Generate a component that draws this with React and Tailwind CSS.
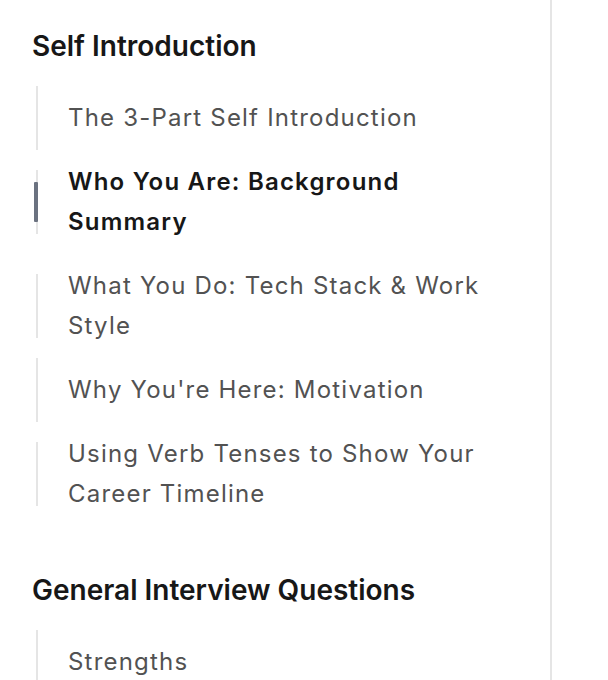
import React from "react";

const sections = [
  {
    title: "Self Introduction",
    items: [
      { label: "The 3-Part Self Introduction" },
      { label: "Who You Are: Background Summary", active: true },
      { label: "What You Do: Tech Stack & Work Style" },
      { label: "Why You're Here: Motivation" },
      { label: "Using Verb Tenses to Show Your Career Timeline" },
    ],
  },
  {
    title: "General Interview Questions",
    items: [{ label: "Strengths" }],
  },
];

export default function App() {
  return (
    <div className="flex h-[680px] w-[608px] overflow-hidden bg-white" style={{ fontFamily: "Inter, 'Noto Sans', sans-serif" }}>
      <nav className="w-[552px] shrink-0 border-r-2 border-[#e5e5e5] pl-8 pr-8 pt-7">
        {sections.map((s, si) => (
          <div key={s.title} className={si > 0 ? "mt-[46px]" : ""}>
            <h2 className="text-[28px] font-semibold leading-[36px] text-[#171717]">{s.title}</h2>
            <ul className="mt-[22px] pl-1">
              {s.items.map((it) => (
                <li key={it.label} className="flex items-center">
                  <div className="relative flex h-16 w-[2px] shrink-0 items-center bg-[#e5e5e5]">
                    {it.active && (
                      <div className="absolute -left-[2px] h-10 w-1 rounded-[1px] bg-[#6b7280]" />
                    )}
                  </div>
                  <a
                    href="#"
                    className={
                      "ml-[30px] py-3 text-[24px] leading-[40px] tracking-[0.05em] " +
                      (it.active ? "font-semibold text-[#171717]" : "font-normal text-[#525252]")
                    }
                  >
                    {it.label}
                  </a>
                </li>
              ))}
            </ul>
          </div>
        ))}
      </nav>
      <div className="flex-1 bg-white" />
    </div>
  );
}
